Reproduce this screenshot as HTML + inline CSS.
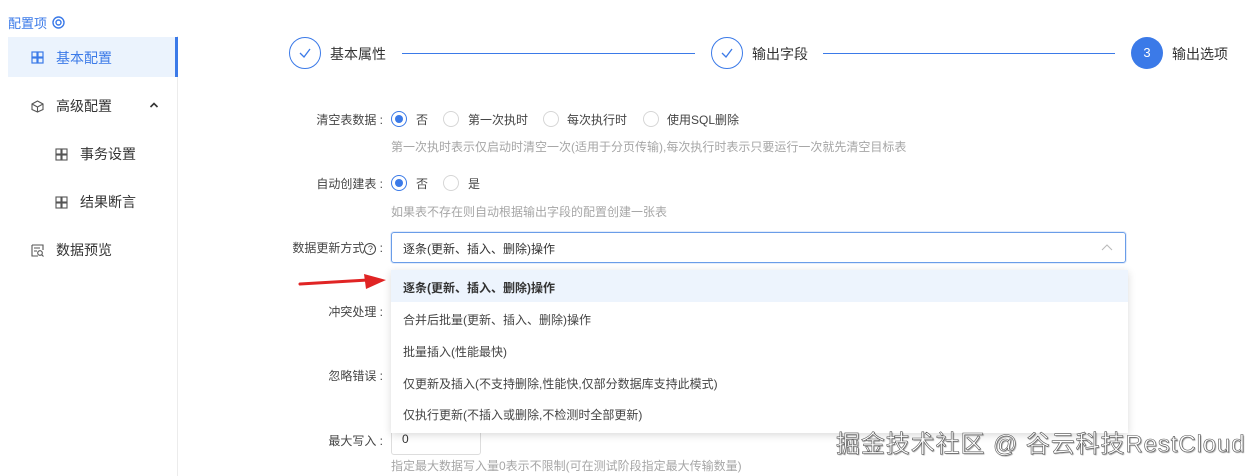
<!DOCTYPE html>
<html><head><meta charset="utf-8"><style>
*{margin:0;padding:0;box-sizing:border-box}
body{width:1260px;height:476px;overflow:hidden;background:#fff;font-family:"Liberation Sans","Noto Sans CJK SC",sans-serif;color:#333;font-size:13px;position:relative}
.a{position:absolute;white-space:nowrap}
.lbl{position:absolute;right:877px;white-space:nowrap;font-size:12px;color:#444}
.help{position:absolute;left:391px;font-size:12px;color:#a6a6a6;white-space:nowrap}
.radio{position:absolute;width:16px;height:16px;border:1px solid #d6d6d6;border-radius:50%;background:#fff}
.radio.on{border-color:#3b7ae8}
.radio.on:after{content:"";position:absolute;left:3px;top:3px;width:8px;height:8px;border-radius:50%;background:#3b7ae8}
.rt{position:absolute;font-size:12px;color:#444}
.opt{position:absolute;left:403px;font-size:12px;color:#444}
</style></head><body>
<div class="a" style="left:8px;top:13px;font-size:13px;color:#3b7ae8">配置项</div>
<svg class="a" style="left:52px;top:16px" width="13" height="13"><circle cx="6.5" cy="6.5" r="5.5" fill="none" stroke="#3b7ae8" stroke-width="1.4"/><circle cx="6.5" cy="6.5" r="2.5" fill="none" stroke="#3b7ae8" stroke-width="1.4"/></svg>
<div class="a" style="left:177px;top:36px;width:1px;height:440px;background:#ececec"></div>
<div class="a" style="left:8px;top:37px;width:170px;height:40px;background:#ebf3fd;border-right:3px solid #3b7ae8"></div>
<svg class="a" style="left:31px;top:51px" width="13" height="13"><g fill="none" stroke="#3b7ae8" stroke-width="1.2"><rect x="1" y="1" width="5" height="5"/><rect x="7" y="1" width="5" height="5"/><rect x="1" y="7" width="5" height="5"/><rect x="7" y="7" width="5" height="5"/></g></svg>
<div class="a" style="left:56px;top:48px;font-size:14px;color:#3b7ae8">基本配置</div>
<svg class="a" style="left:31px;top:100px" width="13" height="13"><g fill="none" stroke="#555" stroke-width="1.1"><path d="M6.5 1 L12 4 V9.5 L6.5 12 L1 9.5 V4 Z M1 4 L6.5 7 L12 4 M6.5 7 V12"/></g></svg>
<div class="a" style="left:56px;top:96px;font-size:14px;color:#333">高级配置</div>
<svg class="a" style="left:149px;top:101px" width="10" height="8"><path d="M1.5 6 L5 2.5 L8.5 6" fill="none" stroke="#333" stroke-width="1.6"/></svg>
<svg class="a" style="left:55px;top:148px" width="13" height="13"><g fill="none" stroke="#555" stroke-width="1.1"><rect x="1" y="1" width="5" height="5"/><rect x="7" y="1" width="5" height="5"/><rect x="1" y="7" width="5" height="5"/><rect x="7" y="7" width="5" height="5"/></g></svg>
<div class="a" style="left:80px;top:144px;font-size:14px">事务设置</div>
<svg class="a" style="left:55px;top:196px" width="13" height="13"><g fill="none" stroke="#555" stroke-width="1.1"><rect x="1" y="1" width="5" height="5"/><rect x="7" y="1" width="5" height="5"/><rect x="1" y="7" width="5" height="5"/><rect x="7" y="7" width="5" height="5"/></g></svg>
<div class="a" style="left:80px;top:192px;font-size:14px">结果断言</div>
<svg class="a" style="left:31px;top:244px" width="13" height="13"><g fill="none" stroke="#555" stroke-width="1.1"><path d="M1 1 H12 V6 M1 1 V12 H7 M3 4 H9 M3 7 H6"/><circle cx="9" cy="9" r="2.3"/><path d="M10.7 10.7 L12.5 12.5"/></g></svg>
<div class="a" style="left:56px;top:240px;font-size:14px">数据预览</div>

<div class="a" style="left:289px;top:37px;width:32px;height:32px;border:1px solid #3b7ae8;border-radius:50%"></div>
<svg class="a" style="left:297px;top:45px" width="16" height="16"><path d="M3 8 L7 12 L13 4" fill="none" stroke="#3b7ae8" stroke-width="1.3"/></svg>
<div class="a" style="left:330px;top:44px;font-size:14px">基本属性</div>
<div class="a" style="left:402px;top:53px;width:293px;height:1px;background:#3b7ae8"></div>
<div class="a" style="left:711px;top:37px;width:32px;height:32px;border:1px solid #3b7ae8;border-radius:50%"></div>
<svg class="a" style="left:719px;top:45px" width="16" height="16"><path d="M3 8 L7 12 L13 4" fill="none" stroke="#3b7ae8" stroke-width="1.3"/></svg>
<div class="a" style="left:752px;top:44px;font-size:14px">输出字段</div>
<div class="a" style="left:823px;top:53px;width:292px;height:1px;background:#3b7ae8"></div>
<div class="a" style="left:1131px;top:37px;width:32px;height:32px;background:#3b7ae8;border-radius:50%;color:#fff;text-align:center;line-height:32px;font-size:13px">3</div>
<div class="a" style="left:1172px;top:44px;font-size:14px">输出选项</div>

<div class="lbl" style="top:111px">清空表数据 :</div>
<div class="radio on" style="left:391px;top:111px"></div><div class="rt" style="left:416px;top:111px">否</div>
<div class="radio" style="left:443px;top:111px"></div><div class="rt" style="left:468px;top:111px">第一次执时</div>
<div class="radio" style="left:543px;top:111px"></div><div class="rt" style="left:567px;top:111px">每次执行时</div>
<div class="radio" style="left:643px;top:111px"></div><div class="rt" style="left:667px;top:111px">使用SQL删除</div>
<div class="help" style="top:138px">第一次执时表示仅启动时清空一次(适用于分页传输),每次执行时表示只要运行一次就先清空目标表</div>
<div class="lbl" style="top:175px">自动创建表 :</div>
<div class="radio on" style="left:391px;top:175px"></div><div class="rt" style="left:416px;top:175px">否</div>
<div class="radio" style="left:443px;top:175px"></div><div class="rt" style="left:468px;top:175px">是</div>
<div class="help" style="top:203px">如果表不存在则自动根据输出字段的配置创建一张表</div>
<div class="lbl" style="top:239px">数据更新方式<span style="display:inline-block;width:12px;height:12px;border:1px solid #444;border-radius:50%;font-size:9px;line-height:10px;text-align:center">?</span> :</div>
<div class="a" style="left:391px;top:232px;width:735px;height:31px;border:1px solid #6a9de8;border-radius:3px;box-shadow:0 0 0 1px #e3ecfb"></div>
<div class="a" style="left:403px;top:240px;font-size:12px;color:#333">逐条(更新、插入、删除)操作</div>
<svg class="a" style="left:1101px;top:243px" width="12" height="8"><path d="M1 7 L6 2 L11 7" fill="none" stroke="#bbb" stroke-width="1.1"/></svg>

<div class="lbl" style="top:303px">冲突处理 :</div>
<div class="lbl" style="top:367px">忽略错误 :</div>
<div class="lbl" style="top:432px">最大写入 :</div>
<div class="a" style="left:391px;top:426px;width:90px;height:29px;border:1px solid #ddd;border-radius:3px"></div>
<div class="a" style="left:402px;top:432px;font-size:12px">0</div>
<div class="help" style="top:457px">指定最大数据写入量0表示不限制(可在测试阶段指定最大传输数量)</div>

<div class="a" style="left:391px;top:270px;width:737px;height:163px;background:#fff;box-shadow:0 2px 8px rgba(0,0,0,.15)"></div>
<div class="a" style="left:391px;top:270px;width:737px;height:32px;background:#edf4fd"></div>
<div class="opt" style="top:279px;font-weight:bold;color:#333">逐条(更新、插入、删除)操作</div>
<div class="opt" style="top:311px">合并后批量(更新、插入、删除)操作</div>
<div class="opt" style="top:343px">批量插入(性能最快)</div>
<div class="opt" style="top:375px">仅更新及插入(不支持删除,性能快,仅部分数据库支持此模式)</div>
<div class="opt" style="top:406px">仅执行更新(不插入或删除,不检测时全部更新)</div>

<svg class="a" style="left:298px;top:272px" width="92" height="20"><path d="M2 12 L70 8" stroke="#e02424" stroke-width="3" stroke-linecap="round"/><path d="M66 2 L88 8 L68 17 Z" fill="#e02424"/></svg>

<div class="a" style="left:836px;top:424px;font-size:24px;letter-spacing:0.9px;color:#fff;-webkit-text-stroke:0.6px #555;text-shadow:1px 1px 1px rgba(0,0,0,.4)">掘金技术社区 @ 谷云科技RestCloud</div>
</body></html>
